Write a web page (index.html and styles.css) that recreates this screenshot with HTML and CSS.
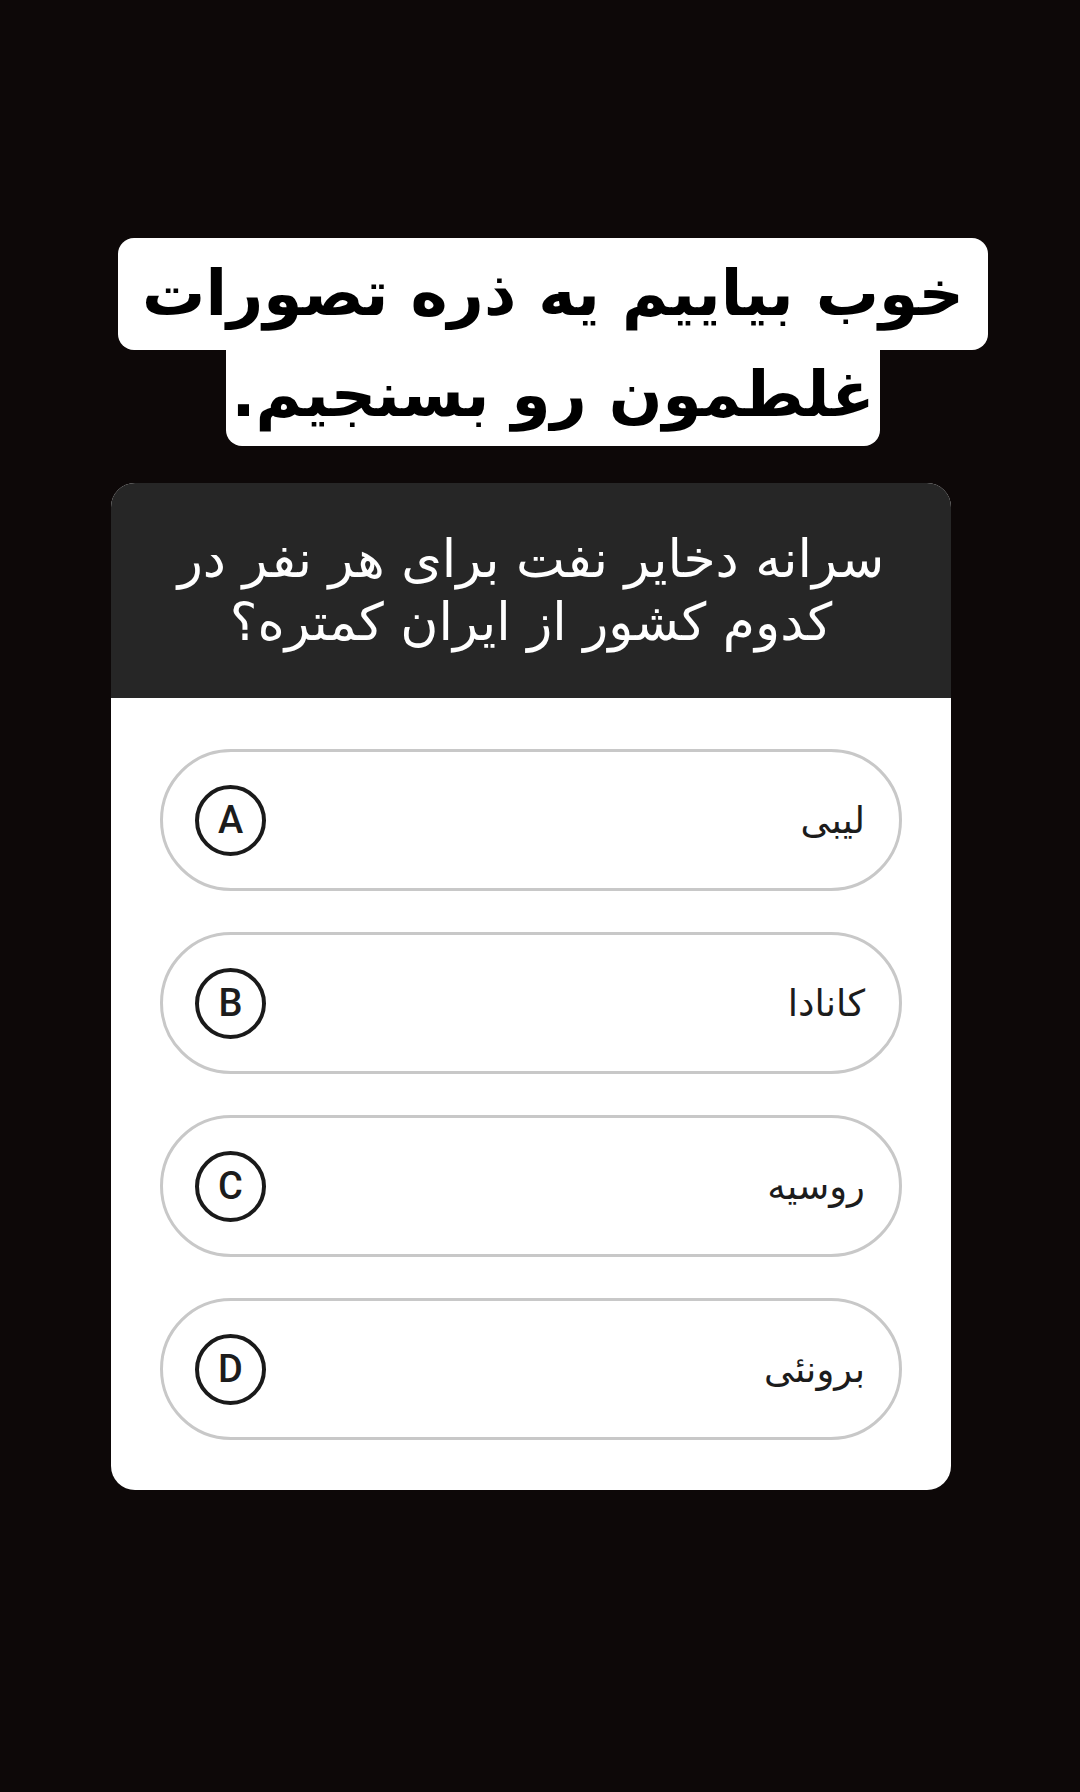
FILE: index.html
```html
<!DOCTYPE html>
<html lang="fa" dir="rtl">
<head>
<meta charset="utf-8">
<title>Quiz</title>
<link rel="stylesheet" href="styles.css">
</head>
<body>
<main class="page">
  <div class="title">
    <div class="title-line title-line-1">خوب بیاییم یه ذره تصورات</div>
    <div class="title-line title-line-2">غلطمون رو بسنجیم.</div>
  </div>
  <section class="card">
    <header class="card-head">
      <p class="question">سرانه دخایر نفت برای هر نفر در<br>کدوم کشور از ایران کمتره؟</p>
    </header>
    <div class="options">
      <div class="option"><span class="opt-text">لیبی</span><span class="badge">A</span></div>
      <div class="option"><span class="opt-text">کانادا</span><span class="badge">B</span></div>
      <div class="option"><span class="opt-text">روسیه</span><span class="badge">C</span></div>
      <div class="option"><span class="opt-text">برونئی</span><span class="badge">D</span></div>
    </div>
  </section>
</main>
</body>
</html>
```
FILE: styles.css
```css
* { box-sizing: border-box; }
html, body {
  margin: 0;
  padding: 0;
  background: #0d0808;
}
body {
  width: 1080px;
  height: 1792px;
  overflow: hidden;
  font-family: "DejaVu Sans", "Noto Sans", sans-serif;
}
.page {
  display: flex;
  flex-direction: column;
  align-items: center;
  padding-top: 238px;
  padding-right: 18px;
}
.title {
  display: flex;
  flex-direction: column;
  align-items: center;
  margin-left: 44px;
}
.title-line {
  background: #ffffff;
  color: #000;
  font-weight: bold;
  font-family: "DejaVu Sans", sans-serif;
  font-size: 63px;
  text-align: center;
  white-space: nowrap;
  border-radius: 16px;
}
.title-line-1 {
  height: 112px;
  line-height: 112px;
  padding: 0 24px;
}
.title-line-2 {
  height: 96px;
  line-height: 90px;
  padding: 0 6px;
  border-top-left-radius: 0;
  border-top-right-radius: 0;
}
.card {
  margin-top: 37px;
  width: 840px;
  background: #fff;
  border-radius: 24px;
  overflow: hidden;
}
.card-head {
  background: #262626;
  height: 215px;
  display: flex;
  align-items: center;
  justify-content: center;
}
.question {
  margin: 0;
  color: #fff;
  font-size: 52px;
  line-height: 63px;
  text-align: center;
  font-weight: normal;
}
.options {
  display: flex;
  flex-direction: column;
  gap: 41px;
  padding: 51px 49px 50px;
}
.option {
  height: 142px;
  border: 3px solid #c8c8c8;
  border-radius: 71px;
  display: flex;
  align-items: center;
  justify-content: space-between;
  padding: 0 34px 0 32px;
}
.opt-text {
  font-size: 37px;
  color: #1c1c1c;
}
.badge {
  width: 71px;
  height: 71px;
  border: 4px solid #1a1a1a;
  border-radius: 50%;
  display: flex;
  align-items: center;
  justify-content: center;
  font-family: "Roboto", "DejaVu Sans Condensed", sans-serif;
  font-weight: 500;
  font-size: 38px;
  color: #1c1c1c;
}
```
